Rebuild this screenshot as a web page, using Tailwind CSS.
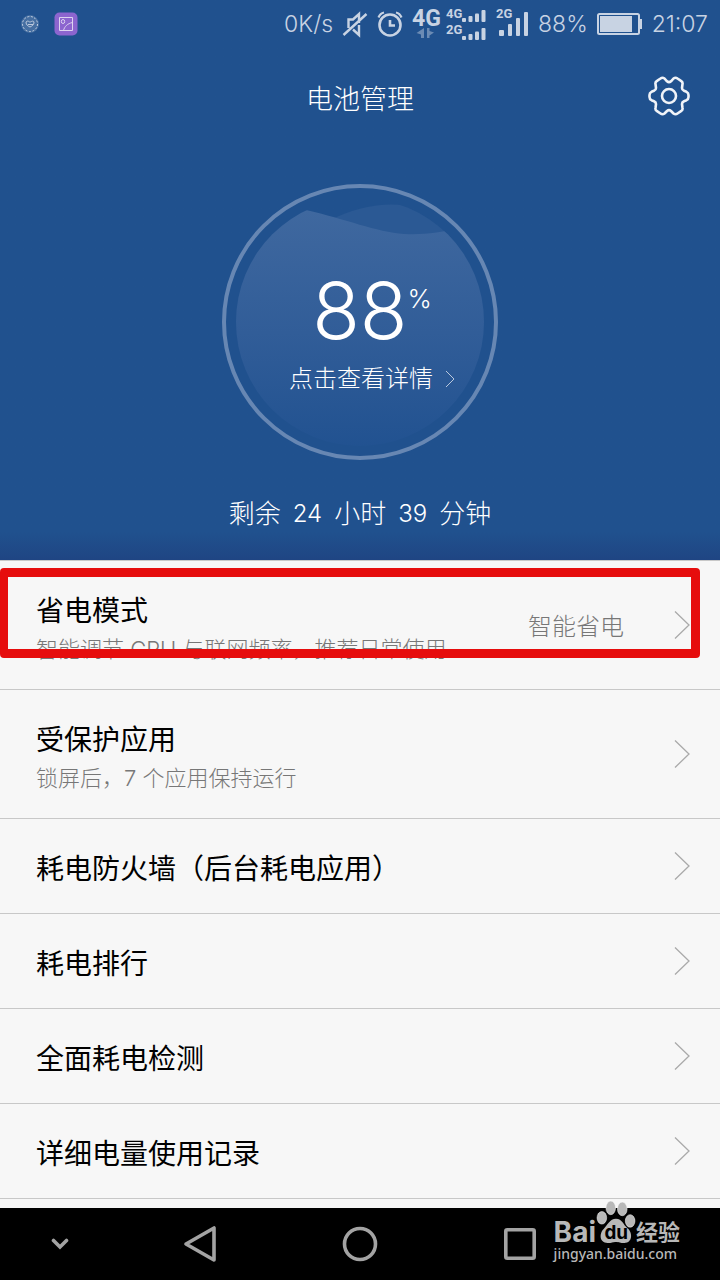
<!DOCTYPE html>
<html lang="zh-CN">
  <head>
    <meta charset="UTF-8" />
    <meta name="viewport" content="width=device-width, initial-scale=1.0" />
    <title>电池管理</title>
    <script src="https://cdn.jsdelivr.net/npm/@tailwindcss/browser@4"></script>
  </head>
  <body class="flex min-h-screen flex-col bg-[#f7f7f7] font-['Inter','Noto_Sans_CJK_SC',sans-serif] text-black">

    <!-- Hero: status bar, title and battery gauge -->
    <header class="flex flex-col bg-linear-to-b from-[#20518e] from-95% to-[#1f4583] text-white">

      <!-- Status bar -->
      <div class="flex h-12 items-center justify-between pr-3 pl-5 text-[#c8d3e3]">
        <div class="flex items-center gap-[14px]">
          <svg class="size-5" viewBox="0 0 20 20" fill="none" stroke="currentColor">
            <circle cx="10" cy="10" r="9" fill="#8fa8c9" fill-opacity=".35" stroke="none" />
            <circle cx="10" cy="10" r="7.5" stroke-dasharray="2 1.6" />
            <path d="M6 8c2-2 3 0 4 0s3-2 4 0c0 3-2 4-4 5-2-1-4-2-4-5M8 10.500h5" stroke-width=".9" />
          </svg>
          <svg class="size-6" viewBox="0 0 24 24" fill="none" stroke="#dcd3f0">
            <rect x=".5" y=".5" width="23" height="23" rx="5" fill="#8c65cf" stroke="none" />
            <path d="M5.500 5.500h13v13h-13zM9.500 18.500c1-4 4-7 9-8" />
            <ellipse cx="9" cy="9.500" rx="1.700" ry="2" />
          </svg>
        </div>

        <div class="flex items-center gap-[9px] text-[23px] font-light">
          <span>0K/s</span>
          <svg class="h-7 w-[26px]" viewBox="0 0 26 28" fill="none" stroke="currentColor" stroke-width="2.400">
            <path d="M6.500 18V9.500H11L17 4v9M11 19.500l6 5.500V15M1.500 25L24.500 4" />
          </svg>
          <svg class="h-[26px] w-[26px]" viewBox="0 0 26 26" fill="none" stroke="currentColor" stroke-width="2.600">
            <circle cx="13" cy="14" r="10.500" />
            <path d="M13 9v5.500h5" />
            <path d="M1.500 6.500c1-2.500 3-4.500 5.500-5M24.500 6.500c-1-2.500-3-4.500-5.500-5" stroke-width="2.200" />
          </svg>
          <div class="flex items-center gap-1">
            <svg class="h-9 w-[30px]" viewBox="0 0 30 36" fill="currentColor">
              <text x="0" y="20" class="font-['Roboto'] text-[23px] font-bold">4G</text>
              <path d="M12 22v10h-3v-3.500l-4.500-1.500zM15 22v10h2.500v-2.500l4.500-3-4.500-1.500v-3z" opacity=".45" />
            </svg>
            <svg class="h-9 w-[41px]" viewBox="0 0 41 36" fill="currentColor">
              <text x="0" y="12" class="font-['Roboto'] text-[13px] font-bold">4G</text>
              <text x="0" y="28" class="font-['Roboto'] text-[13px] font-bold">2G</text>
              <rect x="16" y="12" width="4" height="4" rx="1" />
              <rect x="22.500" y="10" width="4" height="6" rx="1" />
              <rect x="29" y="7.500" width="4" height="8.500" rx="1" />
              <rect x="35.500" y="4" width="4" height="12" rx="1" />
              <rect x="16" y="30" width="4" height="4" rx="1" />
              <rect x="22.500" y="28" width="4" height="6" rx="1" />
              <rect x="29" y="25.500" width="4" height="8.500" rx="1" />
              <rect x="35.500" y="22" width="4" height="12" rx="1" />
            </svg>
          </div>
          <svg class="h-9 w-[33px]" viewBox="0 0 33 36" fill="currentColor">
            <text x="0" y="12" class="font-['Roboto'] text-[13px] font-bold">2G</text>
            <rect x="3" y="24" width="5" height="6" rx="1" />
            <rect x="12" y="18" width="4" height="12" rx="1" />
            <rect x="20" y="12" width="4" height="18" rx="1" />
            <rect x="28" y="6" width="4" height="24" rx="1" />
          </svg>
          <span>88%</span>
          <svg class="h-6 w-[46px]" viewBox="0 0 46 24" fill="currentColor">
            <rect x="1" y="2" width="41" height="20" rx="1.500" fill="none" stroke="currentColor" stroke-width="2" />
            <rect x="3" y="4" width="32" height="16" />
            <rect x="43" y="7" width="2" height="10" />
          </svg>
          <span>21:07</span>
        </div>
      </div>

      <!-- Title bar -->
      <div class="grid h-24 grid-cols-[1fr_auto_1fr] items-center px-[30px]">
        <h1 class="col-start-2 pt-2 text-[27px] leading-10 font-light">电池管理</h1>
        <button type="button" aria-label="设置" class="justify-self-end">
          <svg class="h-10 w-[42px]" viewBox="0 0 42 40" fill="none" stroke="#f0f3f8" stroke-width="2.600" stroke-linejoin="round">
            <path d="M12.500 2.500Q14.500 1 16.500 2.500L19 5.300Q21 7 23 5.300L25.500 2.500Q27.500 1 29.500 2.500L33 4.800Q35 6 34.500 8L34 12Q34 14 36 14.800L38.500 15.800Q40.500 16.800 40.500 19V21Q40.500 23.200 38.500 24.200L36 25.200Q34 26 34 28L34.500 32Q35 34 33 35.200L29.500 37.500Q27.500 39 25.500 37.500L23 35Q21 33.300 19 35L16.500 37.500Q14.500 39 12.500 37.500L9 35.200Q7 34 7.500 32L8 28Q8 26 6 25.200L3.500 24.200Q1.500 23.200 1.500 21V19Q1.500 16.800 3.500 15.800L6 14.800Q8 14 8 12L7.500 8Q7 6 9 4.800Z" />
            <circle cx="21" cy="20" r="7" />
          </svg>
        </button>
      </div>

      <!-- Battery gauge -->
      <button type="button" class="relative mt-10 flex size-[276px] flex-col items-center self-center rounded-full border-4 border-[#6787b3] pt-[83px]">
        <svg class="absolute inset-0 size-full" viewBox="0 0 268 268">
          <defs>
            <linearGradient id="water" x1="0" y1="0" x2="0" y2="1">
              <stop offset="0" stop-color="#3f689f" />
              <stop offset=".5" stop-color="#315d98" />
              <stop offset="1" stop-color="#205190" />
            </linearGradient>
            <clipPath id="dial"><circle cx="134" cy="134" r="124" /></clipPath>
          </defs>
          <g clip-path="url(#dial)">
            <path d="M100 34C140 14 165 14 200 20L250 60H150Z" fill="#2b5994" />
            <path d="M0 22H80C120 31 150 44 178 46C205 47 220 44 268 32V268H0Z" fill="url(#water)" />
          </g>
        </svg>
        <span class="relative flex items-start pl-6">
          <span class="text-[78px] leading-[80px] font-light">88</span>
          <span class="pt-3 text-[26px] leading-8 font-light">%</span>
        </span>
        <span class="relative flex items-center gap-3 pt-3 pl-6 text-[24px] leading-8 font-light">
          点击查看详情
          <svg class="h-[18px] w-[10px]" viewBox="0 0 10 18" fill="none" stroke="#b9c8dd"><path d="M1 1l8 8-8 8" /></svg>
        </span>
      </button>

      <p class="flex justify-center gap-3 pt-[34px] pb-[26px] text-[26px] leading-10 font-light">
        <span>剩余</span><span class="text-[24px]">24</span><span>小时</span><span class="text-[24px]">39</span><span>分钟</span>
      </p>
    </header>

    <!-- Settings list -->
    <main class="relative border-t border-[#c8c8c8]">
      <ul>
        <li class="border-b border-[#c8c8c8]">
          <a href="#" class="flex h-32 items-center pr-[30px] pl-9">
            <span class="flex flex-1 flex-col pt-2">
              <span class="text-[28px] leading-10">省电模式</span>
              <span class="text-[22px] leading-9 font-light text-[#777]">智能调节 CPU 与联网频率，推荐日常使用</span>
            </span>
            <span class="pt-1 pr-[50px] text-[24px] font-light text-[#777]">智能省电</span>
            <svg class="h-7 w-4" viewBox="0 0 16 28" fill="none" stroke="#aaa" stroke-width="1.300"><path d="M1 .5L15 14 1 27.500" /></svg>
          </a>
        </li>
        <li class="border-b border-[#c8c8c8]">
          <a href="#" class="flex h-32 items-center pr-[30px] pl-9">
            <span class="flex flex-1 flex-col pt-2">
              <span class="text-[28px] leading-10">受保护应用</span>
              <span class="text-[22px] leading-9 font-light text-[#777]">锁屏后，7 个应用保持运行</span>
            </span>
            <svg class="h-7 w-4" viewBox="0 0 16 28" fill="none" stroke="#aaa" stroke-width="1.300"><path d="M1 .5L15 14 1 27.500" /></svg>
          </a>
        </li>
        <li class="border-b border-[#c8c8c8]">
          <a href="#" class="flex h-[94px] items-center pr-[30px] pl-9">
            <span class="flex-1 pt-[6px] text-[28px] leading-10">耗电防火墙（后台耗电应用）</span>
            <svg class="h-7 w-4" viewBox="0 0 16 28" fill="none" stroke="#aaa" stroke-width="1.300"><path d="M1 .5L15 14 1 27.500" /></svg>
          </a>
        </li>
        <li class="border-b border-[#c8c8c8]">
          <a href="#" class="flex h-[94px] items-center pr-[30px] pl-9">
            <span class="flex-1 pt-[6px] text-[28px] leading-10">耗电排行</span>
            <svg class="h-7 w-4" viewBox="0 0 16 28" fill="none" stroke="#aaa" stroke-width="1.300"><path d="M1 .5L15 14 1 27.500" /></svg>
          </a>
        </li>
        <li class="border-b border-[#c8c8c8]">
          <a href="#" class="flex h-[94px] items-center pr-[30px] pl-9">
            <span class="flex-1 pt-[6px] text-[28px] leading-10">全面耗电检测</span>
            <svg class="h-7 w-4" viewBox="0 0 16 28" fill="none" stroke="#aaa" stroke-width="1.300"><path d="M1 .5L15 14 1 27.500" /></svg>
          </a>
        </li>
        <li class="border-b border-[#c8c8c8]">
          <a href="#" class="flex h-[94px] items-center pr-[30px] pl-9">
            <span class="flex-1 pt-[6px] text-[28px] leading-10">详细电量使用记录</span>
            <svg class="h-7 w-4" viewBox="0 0 16 28" fill="none" stroke="#aaa" stroke-width="1.300"><path d="M1 .5L15 14 1 27.500" /></svg>
          </a>
        </li>
      </ul>

      <!-- Highlight around the power saving row -->
      <div class="pointer-events-none absolute top-[7px] right-5 left-0 h-[90px] rounded-sm border-[9px] border-l-8 border-[#e60d0d]"></div>
    </main>

    <!-- Navigation bar -->
    <nav class="relative mt-auto bg-black text-[#a3a3a3]">
      <div class="flex h-[72px] items-center">
        <button type="button" aria-label="收起" class="flex w-1/6 justify-center">
          <svg class="h-3 w-[18px]" viewBox="0 0 18 12" fill="none" stroke="currentColor" stroke-width="3.600" stroke-linecap="round"><path d="M2.500 2.500L9 9l6.500-6.500" /></svg>
        </button>
        <button type="button" aria-label="返回" class="flex w-2/9 justify-center">
          <svg class="h-[38px] w-[34px]" viewBox="0 0 34 38" fill="none" stroke="currentColor" stroke-width="3.600" stroke-linejoin="round"><path d="M31 3v32L3 19z" /></svg>
        </button>
        <button type="button" aria-label="主页" class="flex w-2/9 justify-center">
          <svg class="size-9" viewBox="0 0 36 36" fill="none" stroke="currentColor" stroke-width="3.600"><circle cx="18" cy="18" r="15.500" /></svg>
        </button>
        <button type="button" aria-label="最近任务" class="flex w-2/9 justify-center">
          <svg class="size-8" viewBox="0 0 32 32" fill="none" stroke="currentColor" stroke-width="3.600"><rect x="1.800" y="1.800" width="28.400" height="28.400" rx="1.500" /></svg>
        </button>
      </div>

      <!-- Watermark -->
      <div class="absolute right-10 bottom-5 flex flex-col text-[#b8b8b8]">
        <div class="flex h-12 items-end">
          <span class="text-[28px] leading-8 font-bold">Bai</span>
          <svg class="h-11 w-10 self-start" viewBox="0 0 38 42" fill="currentColor">
            <g stroke="#fff" stroke-opacity=".6" stroke-width=".8">
              <ellipse cx="5.500" cy="17" rx="4.600" ry="6" />
              <ellipse cx="14" cy="7.500" rx="4.600" ry="6.500" />
              <ellipse cx="25" cy="8.500" rx="4.600" ry="6.500" />
              <ellipse cx="32.500" cy="20" rx="4.600" ry="6" />
            </g>
            <path d="M19 18c6 0 7 6 11 9 5 4 5 14-3 14-4 0-5-1-8-1s-4 1-8 1c-8 0-8-9-4-13s6-10 12-10z" />
            <text x="8" y="37" fill="#000" class="font-['Inter'] text-[18px] font-bold">du</text>
          </svg>
          <span class="text-[22px] leading-8 font-bold">经验</span>
        </div>
        <span class="font-['Noto_Sans'] text-[14px] leading-3 font-medium">jingyan.baidu.com</span>
      </div>
    </nav>
  </body>
</html>
